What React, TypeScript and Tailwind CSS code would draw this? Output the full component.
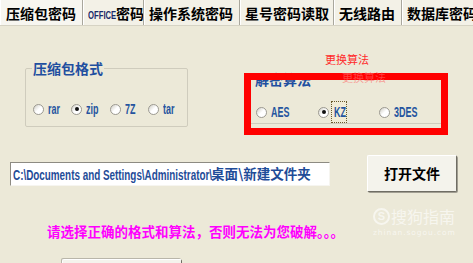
import React from 'react';

const sans = "font-['Liberation_Sans','Noto_Sans_CJK_SC',sans-serif]";
const cjk = "font-['Noto_Sans_CJK_SC','Liberation_Sans',sans-serif]";

interface RadioProps {
  label: string;
  checked?: boolean;
  focused?: boolean;
  width: string;
}

// the old XP font is a narrow one; squeeze Liberation Sans to match it
function Radio({ label, checked, focused, width }: RadioProps) {
  return (
    <div className={`flex items-center ${width}`}>
      <span className="relative flex h-[11px] w-[11px] shrink-0 items-center justify-center rounded-full border border-[#9c9a92] bg-gradient-to-br from-[#cfcdc4] via-white to-white">
        {checked && <span className="h-[4px] w-[4px] rounded-full bg-[#111]" />}
      </span>
      <span
        className={`flex h-[20px] items-center whitespace-nowrap ${
          focused ? 'ml-[3px] w-[14px] pl-[2px] outline outline-1 outline-dotted outline-[#6b5a2a] bg-[#f1ecd6]' : 'ml-[4px]'
        }`}
      >
        <span className={`inline-block origin-left scale-x-[0.64] text-[14px] leading-[16px] font-bold text-[#24549f] ${sans}`}>
          {label}
        </span>
      </span>
    </div>
  );
}

const tabs = [
  { label: '压缩包密码', w: 'w-[83px]', active: true },
  { label: 'OFFICE', w: 'w-[61px]' },
  { label: '操作系统密码', w: 'w-[96px]' },
  { label: '星号密码读取', w: 'w-[94px]' },
  { label: '无线路由', w: 'w-[68px]' },
  { label: '数据库密码', w: 'w-[80px]' },
];

export default function App() {
  return (
    <div className="relative flex h-[263px] w-[473px] flex-col overflow-hidden bg-[#ECE9D8]">
      {/* window top edge */}
      <div className="h-[1px] bg-[#e8eef8]" />
      <div className="h-[4px] bg-gradient-to-b from-[#3a74ec] to-[#1d56dc]" />

      <div className="flex flex-1">
        <div className="w-[3px] bg-gradient-to-r from-[#1d56dc] to-[#3b72e8]" />

        <div className="flex flex-1 flex-col">
          {/* tab strip */}
          <div className="flex h-[26px] shrink-0 border-b border-[#d6d3c4] bg-[#F3F1E7]">
            {tabs.map((t) => (
              <div
                key={t.label}
                className={`flex shrink-0 items-center overflow-hidden whitespace-nowrap pl-[5px] ${t.w} border-r border-[#a9a79d] shadow-[1px_0_0_#fff] ${
                  t.active ? 'border-l border-l-white bg-[#F7F6F0]' : ''
                }`}
              >
                {t.label === 'OFFICE' ? (
                  <span className="flex items-center">
                    <span className="inline-block w-[28px]">
                      <span className={`inline-block origin-left scale-x-[0.7] text-[11px] font-bold text-[#1a2a6a] ${sans}`}>OFFICE</span>
                    </span>
                    <span className={`text-[14px] leading-[18px] font-bold text-black ${cjk}`}>密码</span>
                  </span>
                ) : (
                  <span className={`text-[14px] leading-[18px] font-bold text-black ${cjk}`}>{t.label}</span>
                )}
              </div>
            ))}
          </div>

          {/* group boxes */}
          <div className="mt-[35px] flex items-start">
            <fieldset className="ml-[25px] h-[66px] w-[163px] rounded-[2px] border border-[#cfccbd] pl-[7px]">
              <legend className={`-ml-[1px] px-[1px] text-[14px] leading-[14px] font-bold text-[#1F4FA0] ${cjk}`}>压缩包格式</legend>
              <div className="mt-[24px] flex">
                <Radio label="rar" width="w-[38px]" />
                <Radio label="zip" checked width="w-[39px]" />
                <Radio label="7Z" width="w-[38px]" />
                <Radio label="tar" width="w-[38px]" />
              </div>
            </fieldset>

            <fieldset className="mt-[11px] ml-[59px] h-[52px] w-[190px] border border-[#cfccbd] pl-[8px]">
              <legend className={`-ml-[2px] px-[1px] text-[14px] leading-[14px] font-bold text-[#1F4FA0] ${cjk}`}>解密算法</legend>
              <div className="mt-[16px] flex">
                <Radio label="AES" width="w-[62px]" />
                <Radio label="KZ" checked focused width="w-[61px]" />
                <Radio label="3DES" width="w-[62px]" />
              </div>
            </fieldset>
          </div>

          {/* path + open button */}
          <div className="mt-[28px] flex items-center">
            <div className="ml-[10px] flex h-[24px] w-[320px] items-center overflow-hidden border border-t-[#8d8b82] border-l-[#8d8b82] border-b-[#f6f5f0] border-r-[#f6f5f0] bg-white pl-[2px]">
              <span className="inline-block w-[198px] shrink-0 whitespace-nowrap">
                <span className={`inline-block origin-left scale-x-[0.705] text-[14px] font-bold text-[#1f4c98] ${sans}`}>C:\Documents and Settings\Administrator\</span>
              </span>
              <span className={`whitespace-nowrap text-[13.5px] font-bold text-[#1f4c98] ${cjk}`}>桌面\新建文件夹</span>
            </div>
            <button className="ml-[37px] flex h-[37px] w-[90px] items-center justify-center rounded-[2px] border border-t-white border-l-white border-b-[#6f6d64] border-r-[#6f6d64] bg-[#F4F3EC] shadow-[1px_1px_0_#a19e92]">
              <span className={`text-[14px] font-bold text-black ${cjk}`}>打开文件</span>
            </button>
          </div>

          {/* hint */}
          <p className={`mt-[31px] ml-[47px] whitespace-nowrap text-[13.5px] leading-[16px] font-bold text-[#FF00FF] ${cjk}`}>
            请选择正确的格式和算法，否则无法为您破解。。。
          </p>

          <div className="mt-[20px] ml-[62px] h-[30px] w-[120px] shrink-0 rounded-[2px] border border-t-white border-l-white border-b-[#6f6d64] border-r-[#6f6d64] bg-[#F4F3EC] shadow-[-1px_-1px_0_#b9b6aa]" />
        </div>
      </div>

      {/* annotation: red highlight box */}
      <div className="absolute left-[244px] top-[73px] h-[62px] w-[204px] border-[7px] border-[#FF0000]" />
      <span className={`absolute left-[325px] top-[51px] text-[11px] leading-[16px] text-[#ff2a2a] ${cjk}`}>更换算法</span>
      <span className={`absolute left-[342px] top-[69px] text-[11px] leading-[16px] text-[#ff6b6b]/60 ${cjk}`}>更换算法</span>

      {/* watermark */}
      <div className="absolute left-[373px] top-[206px] flex flex-col items-start opacity-60">
        <div className="flex items-center">
          <span className="flex h-[17px] w-[17px] items-center justify-center rounded-full border-2 border-white">
            <span className="text-[11px] leading-[11px] font-bold text-white font-['Liberation_Sans',sans-serif]">S</span>
          </span>
          <span className={`ml-[1px] text-[16px] leading-[20px] text-white ${cjk}`}>搜狗指南</span>
        </div>
        <span className="mt-[2px] text-[7.5px] leading-[9px] tracking-[0.9px] text-white font-['DejaVu_Sans',sans-serif]">zhinan.sogou.com</span>
      </div>
    </div>
  );
}
